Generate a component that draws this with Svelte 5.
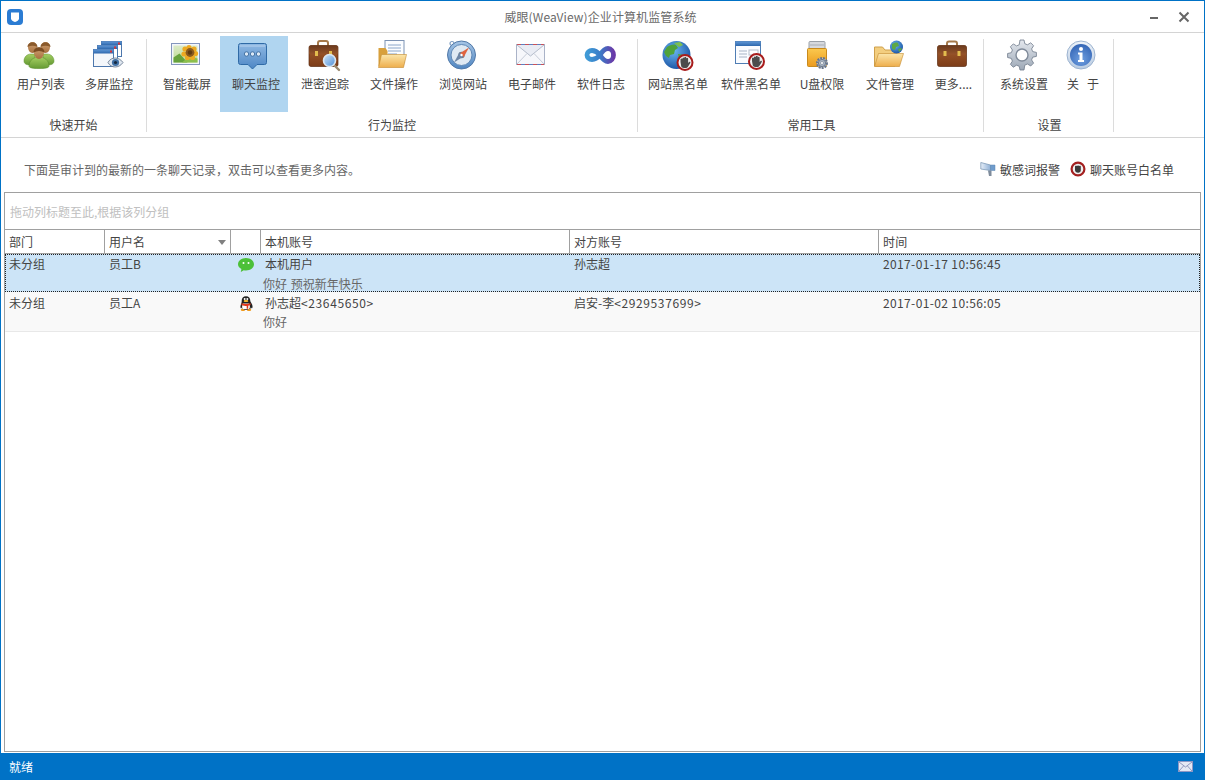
<script>
  // Ribbon definition: groups of toolbar buttons
  const groups = [
    {
      label: '快速开始',
      cls: 'g1',
      items: [
        { icon: 'users', text: '用户列表' },
        { icon: 'screens', text: '多屏监控' }
      ]
    },
    {
      label: '行为监控',
      cls: 'g2',
      items: [
        { icon: 'photo', text: '智能截屏' },
        { icon: 'chat', text: '聊天监控', active: true },
        { icon: 'leak', text: '泄密追踪' },
        { icon: 'folderdoc', text: '文件操作' },
        { icon: 'compass', text: '浏览网站' },
        { icon: 'mail', text: '电子邮件' },
        { icon: 'infinity', text: '软件日志' }
      ]
    },
    {
      label: '常用工具',
      cls: 'g3',
      items: [
        { icon: 'globestop', text: '网站黑名单', size: 'wide' },
        { icon: 'winstop', text: '软件黑名单', size: 'wide' },
        { icon: 'usb', text: 'U盘权限' },
        { icon: 'foldernet', text: '文件管理' },
        { icon: 'case', text: '更多....', size: 'slim' }
      ]
    },
    {
      label: '设置',
      cls: 'g4',
      items: [
        { icon: 'gear', text: '系统设置' },
        { icon: 'info', text: '关   于', size: 'tiny' }
      ]
    }
  ]

  const rows = [
    {
      dept: '未分组',
      user: '员工B',
      app: 'wechat',
      local: '本机用户',
      peer: '孙志超',
      time: '2017-01-17 10:56:45',
      msg: '你好 预祝新年快乐',
      selected: true
    },
    {
      dept: '未分组',
      user: '员工A',
      app: 'qq',
      local: '孙志超',
      localId: '<23645650>',
      peer: '启安-李',
      peerId: '<2929537699>',
      time: '2017-01-02 10:56:05',
      msg: '你好',
      selected: false
    }
  ]
</script>

{#snippet stopBadge(cx, cy, r)}
  <circle {cx} {cy} r={r} fill="#f2f2f2" stroke="#a81c1c" stroke-width="2" />
  <g transform="translate({cx} {cy}) scale(1.25)">
    <path
      d="M-3.600 -.5v-2.200a.8.8 0 0 1 1.500 0v-.8a.8.8 0 0 1 1.500 0v-.4a.8.8 0 0 1 1.600 0v.6a.8.8 0 0 1 1.500 0v3.600l.8-.8c.6-.4 1.300.2.900.8l-1.700 2.800c-.5.900-1.200 1.300-2.400 1.300h-.9c-1.500 0-2.400-1-2.400-2.400z"
      fill="#4c4c4c"
    />
  </g>
{/snippet}

{#snippet icon(name)}
  <svg class="ico" viewBox="0 0 32 32" width="32" height="32" aria-hidden="true">
    {#if name === 'users'}
      <path d="M0 22c0-4 3-7 7-7h4v9c-1 2-3 2-5 2-3 0-6-1-6-4zM19 15h4c4 0 7 3 7 7 0 3-3 4-6 4-2 0-4 0-5-2z" fill="url(#gGreen)" stroke="#5b8f2c" stroke-width=".5" />
      <path d="M4 8c0-3 2-5 4.500-5S13 5 13 8s-2 6-4.500 6S4 11 4 8zM17 8c0-3 2-5 4.500-5S26 5 26 8s-2 6-4.500 6S17 11 17 8z" fill="url(#gSkin)" />
      <path d="M3.500 8c0-6.500 10-6.500 10 0-3-1.800-7-1.800-10 0zM16.500 8c0-6.500 10-6.500 10 0-3-1.800-7-1.800-10 0z" fill="#8a5a2c" />
      <path d="M5 27c0-6 5-9 10-9s10 3 10 9c0 2-4 2.500-10 2.500S5 29 5 27z" fill="url(#gGreen)" stroke="#5b8f2c" stroke-width=".6" />
      <path d="M10 13.500c0-3.500 2.200-5 5-5s5 1.500 5 5-2.200 6.500-5 6.500-5-3-5-6.500z" fill="url(#gSkin)" />
      <path d="M9.500 13.500c0-7 11-7 11 0-3.500-2-7.500-2-11 0z" fill="#7c4d24" />
    {:else if name === 'screens'}
      <rect x="9.500" y="2.500" width="20" height="15" fill="#fff" stroke="#4d77ad" />
      <rect x="9.500" y="2.500" width="20" height="3.500" fill="url(#gBlue)" />
      <rect x="5.500" y="6.500" width="20" height="15" fill="#fff" stroke="#4d77ad" />
      <rect x="5.500" y="6.500" width="20" height="3.500" fill="url(#gBlue)" />
      <rect x="1.500" y="10.500" width="20" height="17" fill="#f4f7fb" stroke="#4d77ad" />
      <rect x="1.500" y="10.500" width="20" height="4" fill="url(#gBlue)" />
      <rect x="26" y="3.500" width="2" height="2" fill="#d33" />
      <rect x="22" y="7.500" width="2" height="2" fill="#d33" />
      <rect x="18" y="11.500" width="2" height="2" fill="#d33" />
      <path d="M16 23.500c3-6 11-6 15 0-4 6-12 6-15 0z" fill="#dfe7f0" stroke="#5d6f86" stroke-width=".8" />
      <circle cx="23.500" cy="23.500" r="3.600" fill="#3f6fa4" />
      <circle cx="23.500" cy="23.500" r="1.600" fill="#15283f" />
    {:else if name === 'photo'}
      <rect x="1.500" y="4.500" width="28" height="21" fill="#f3f6fb" stroke="#8496bd" />
      <rect x="3.500" y="6.500" width="24" height="17" fill="url(#gSky)" />
      <path d="M3.500 23.500v-5l6-4 8 9z" fill="#66a23c" />
      <path d="M12 23.500l7-6 8.500 2v4z" fill="#8dbf4e" />
      <g fill="#eda921">
        <circle cx="19" cy="8.500" r="2.600" /><circle cx="24" cy="10" r="2.600" /><circle cx="25.500" cy="14.500" r="2.600" />
        <circle cx="22.500" cy="18.500" r="2.600" /><circle cx="17.500" cy="18.500" r="2.600" /><circle cx="14" cy="15" r="2.600" />
        <circle cx="15" cy="10" r="2.600" />
      </g>
      <circle cx="20" cy="13.500" r="4.400" fill="#8a5a1e" />
      <circle cx="20" cy="13.500" r="2.200" fill="#5f3b10" />
    {:else if name === 'chat'}
      <path d="M3.500 4.500h24a2 2 0 0 1 2 2v17a2 2 0 0 1-2 2H20l-4.500 4.500L11 25.500H3.500a2 2 0 0 1-2-2v-17a2 2 0 0 1 2-2z" fill="url(#gChat)" stroke="#2f6aa6" />
      <path d="M3 6h25v2H3z" fill="#a9c9ea" opacity=".7" />
      <g fill="#dce9f6" stroke="#2f5f96" stroke-width=".8">
        <circle cx="9.500" cy="15" r="2.200" /><circle cx="15.500" cy="15" r="2.200" /><circle cx="21.500" cy="15" r="2.200" />
      </g>
    {:else if name === 'leak'}
      <path d="M10 7V4a2 2 0 0 1 2-2h6a2 2 0 0 1 2 2v3" fill="none" stroke="#a67a4c" stroke-width="2" />
      <rect x="1" y="6.500" width="29" height="21" rx="2" fill="url(#gCase)" stroke="#5b2d12" stroke-width=".7" />
      <rect x="1" y="6.500" width="29" height="9" rx="2" fill="url(#gCaseTop)" />
      <rect x="7" y="12" width="3" height="5" fill="#e3bc4e" />
      <rect x="21" y="12" width="3" height="5" fill="#e3bc4e" />
      <path d="M26 26l5 5" stroke="#9a8a70" stroke-width="2.400" stroke-linecap="round" />
      <circle cx="21.500" cy="21.500" r="6" fill="url(#gLens)" stroke="#dbe6f0" stroke-width="1.600" />
    {:else if name === 'folderdoc'}
      <rect x="8" y="1.500" width="19" height="22" fill="#fbfdff" stroke="#7d93b4" />
      <path d="M11 6h13M11 9h13M11 12h13M11 15h9" stroke="#8ba6ca" stroke-width="1" />
      <path d="M1.500 9h7l2 3v15h-9z" fill="#d8a03c" />
      <path d="M1.500 28.500l3-13h25l-3 13z" fill="url(#gFolder)" stroke="#c48a2e" stroke-width=".6" />
    {:else if name === 'compass'}
      <circle cx="6" cy="4.500" r="2" fill="none" stroke="#7d9cc1" stroke-width="1.200" />
      <circle cx="15.500" cy="16" r="14" fill="url(#gRing)" stroke="#5279a8" />
      <circle cx="15.500" cy="16" r="10.500" fill="#dfe9f3" stroke="#5f88b6" />
      <circle cx="15.500" cy="16" r="3.200" fill="#6f7d8e" />
      <path d="M23 8.500l-5.500 10-4-4z" fill="#e0633f" />
      <path d="M8 23.500l5.500-10 4 4z" fill="#6d86a6" />
      <circle cx="15.500" cy="16" r="1.200" fill="#fff" />
    {:else if name === 'mail'}
      <rect x="1.500" y="5.500" width="28" height="20" fill="#f6f7fb" stroke="#aab3c8" />
      <path d="M2 5.500h4M10 5.500h4M18 5.500h4M26 5.500h3M2 25.500h4M10 25.500h4M18 25.500h4M26 25.500h3" stroke="#c9525a" stroke-width="1.200" />
      <path d="M6 5.500h4M14 5.500h4M22 5.500h4M6 25.500h4M14 25.500h4M22 25.500h4" stroke="#5f7fbf" stroke-width="1.200" />
      <path d="M2 6l13.500 11L29 6" fill="#e9ecf4" stroke="#b4bccb" />
      <path d="M2 25l10-10.500M29 25L19 14.500" stroke="#c6ccd8" />
    {:else if name === 'infinity'}
      <path d="M16 16c-2.500-3-5-4.500-8-4.500-2.800 0-5 2-5 4.500s2.200 4.500 5 4.500c3 0 5.500-1.500 8-4.500zm0 0c2.500-4 5-6.500 8-6.500 3.200 0 5.500 3 5.500 6.500s-2.300 6.500-5.500 6.500c-3 0-5.500-2.500-8-6.500z" fill="none" stroke="url(#gInf)" stroke-width="4.800" />
    {:else if name === 'globestop'}
      <circle cx="15.500" cy="16" r="14" fill="url(#gGlobe)" />
      <path d="M6 8c3-2 6-3 9-2l2 3-3 2-1 4-4 1-1 3-3-2-2-4zM17 15l6 1 4 4-2 5-4 3-2-4z" fill="#4fa23b" />
      <path d="M13 4l6-1 3 3-4 2z" fill="#7cc04f" />
      {@render stopBadge(24, 23.500, 7.500)}
    {:else if name === 'winstop'}
      <rect x="1.500" y="2.500" width="25" height="22" fill="#fafcff" stroke="#4f7db4" />
      <rect x="1.500" y="2.500" width="25" height="4.500" fill="url(#gBlue)" />
      <path d="M5 12h8M5 15h8M5 18h8" stroke="#a8b4c6" />
      <rect x="15" y="11" width="9" height="5" fill="#fff" stroke="#b3bdcb" />
      {@render stopBadge(22.500, 22.500, 7.500)}
    {:else if name === 'usb'}
      <path d="M5 2.500h14a1 1 0 0 1 1 1v7H4v-7a1 1 0 0 1 1-1z" fill="#d6d9de" stroke="#9aa0a8" />
      <path d="M5 6h14" stroke="#a9adb4" />
      <rect x="2.500" y="9.500" width="19" height="18" rx="1" fill="url(#gUsb)" stroke="#c98a1d" />
      <g transform="translate(17 24)">
        <circle r="5" fill="#c3ccd8" stroke="#68758a" stroke-dasharray="2 1" stroke-width="2" />
        <circle r="3.600" fill="#aab6c5" stroke="#6b7788" />
        <circle r="1.500" fill="#fff" stroke="#6b7788" stroke-width=".6" />
      </g>
    {:else if name === 'foldernet'}
      <path d="M1.500 8h8l2.500 3h10v16h-20.500z" fill="#f3ce7f" stroke="#cfa04c" />
      <path d="M1.500 27.500l4-13h25l-4 13z" fill="url(#gFolder)" stroke="#c48a2e" stroke-width=".6" />
      <circle cx="23.500" cy="8" r="6.500" fill="url(#gGlobe)" />
      <path d="M19 5c2-1 4-2 6-1l1 3-3 1-1 3-3-1zM25 10l3-1 1 1-3 3z" fill="#5da845" />
    {:else if name === 'case'}
      <path d="M10 7V4.500a2 2 0 0 1 2-2h6a2 2 0 0 1 2 2V7" fill="none" stroke="#a67a4c" stroke-width="2" />
      <rect x="0.500" y="6.500" width="29" height="21" rx="2" fill="url(#gCase)" stroke="#5b2d12" stroke-width=".7" />
      <rect x="0.500" y="6.500" width="29" height="9" rx="2" fill="url(#gCaseTop)" />
      <rect x="6.500" y="12" width="3" height="5" fill="#e3bc4e" />
      <rect x="20.500" y="12" width="3" height="5" fill="#e3bc4e" />
    {:else if name === 'gear'}
      <path d="M13 1h4l.8 3.700 2.700 1.100 3.200-2 2.900 2.900-2 3.200 1.100 2.700 3.700.8v4l-3.700.8-1.100 2.700 2 3.200-2.900 2.900-3.200-2-2.700 1.100L17 31h-4l-.8-3.700-2.700-1.100-3.200 2-2.900-2.900 2-3.200-1.100-2.700L.6 18.500v-4l3.700-.8 1.100-2.700-2-3.200 2.900-2.900 3.200 2 2.700-1.100z" fill="url(#gGear)" stroke="#6e7a8a" stroke-width=".8" />
      <circle cx="15" cy="16" r="6" fill="#fff" stroke="#808b9a" stroke-width="1.400" />
    {:else if name === 'info'}
      <circle cx="15" cy="16" r="14" fill="url(#gInfoRing)" stroke="#9cb3d0" />
      <circle cx="15" cy="16" r="11" fill="url(#gInfo)" />
      <circle cx="15" cy="10" r="2" fill="#fff" />
      <path d="M12 13.500h4.500V21H18v2h-6v-2h1.500v-5.500H12z" fill="#fff" />
    {/if}
  </svg>
{/snippet}

<svg class="defs" width="0" height="0" aria-hidden="true">
  <defs>
    <linearGradient id="gGreen" x1="0" y1="0" x2="0" y2="1"><stop offset="0" stop-color="#a5cf62" /><stop offset="1" stop-color="#659a34" /></linearGradient>
    <linearGradient id="gSkin" x1="0" y1="0" x2="0" y2="1"><stop offset="0" stop-color="#d0a274" /><stop offset="1" stop-color="#a8703e" /></linearGradient>
    <linearGradient id="gBlue" x1="0" y1="0" x2="0" y2="1"><stop offset="0" stop-color="#5f97d6" /><stop offset="1" stop-color="#2e68ad" /></linearGradient>
    <linearGradient id="gSky" x1="0" y1="0" x2="0" y2="1"><stop offset="0" stop-color="#dcebc8" /><stop offset="1" stop-color="#b9d98f" /></linearGradient>
    <linearGradient id="gChat" x1="0" y1="0" x2="0" y2="1"><stop offset="0" stop-color="#8fb9e4" /><stop offset="1" stop-color="#4d86c4" /></linearGradient>
    <linearGradient id="gCase" x1="0" y1="0" x2="0" y2="1"><stop offset="0" stop-color="#a45c2e" /><stop offset="1" stop-color="#7d3d18" /></linearGradient>
    <linearGradient id="gCaseTop" x1="0" y1="0" x2="0" y2="1"><stop offset="0" stop-color="#6a3a1d" /><stop offset="1" stop-color="#96532a" /></linearGradient>
    <linearGradient id="gLens" x1="0" y1="0" x2="1" y2="1"><stop offset="0" stop-color="#cfe6fb" /><stop offset="1" stop-color="#4f8fd6" /></linearGradient>
    <linearGradient id="gFolder" x1="0" y1="0" x2="0" y2="1"><stop offset="0" stop-color="#fbe6ab" /><stop offset="1" stop-color="#eeae4c" /></linearGradient>
    <linearGradient id="gRing" x1="0" y1="0" x2="0" y2="1"><stop offset="0" stop-color="#a7c6e6" /><stop offset="1" stop-color="#4f86c2" /></linearGradient>
    <linearGradient id="gInf" x1="0" y1="0" x2="1" y2="0"><stop offset="0" stop-color="#3f9ad6" /><stop offset=".5" stop-color="#3a7cc8" /><stop offset="1" stop-color="#6a3aa8" /></linearGradient>
    <radialGradient id="gGlobe" cx=".4" cy=".35" r=".75"><stop offset="0" stop-color="#6ab6f2" /><stop offset="1" stop-color="#124a9c" /></radialGradient>
    <linearGradient id="gUsb" x1="0" y1="0" x2="0" y2="1"><stop offset="0" stop-color="#fbc94f" /><stop offset="1" stop-color="#eb9a1d" /></linearGradient>
    <linearGradient id="gGear" x1="0" y1="0" x2="0" y2="1"><stop offset="0" stop-color="#e4e8ee" /><stop offset="1" stop-color="#9da8b6" /></linearGradient>
    <linearGradient id="gInfoRing" x1="0" y1="0" x2="0" y2="1"><stop offset="0" stop-color="#eef3f9" /><stop offset="1" stop-color="#b8cbe2" /></linearGradient>
    <radialGradient id="gInfo" cx=".5" cy=".7" r=".8"><stop offset="0" stop-color="#6f9fe0" /><stop offset="1" stop-color="#2b5db0" /></radialGradient>
    <linearGradient id="gHorn" x1="0" y1="0" x2="1" y2="0"><stop offset="0" stop-color="#e6eef8" /><stop offset="1" stop-color="#8fb0d6" /></linearGradient>
  </defs>
</svg>

<div class="window">
  <header class="titlebar">
    <svg class="logo" viewBox="0 0 16 16" width="16" height="16" aria-hidden="true">
      <rect width="16" height="16" rx="4" fill="#2b7cd3" />
      <path d="M4 3.500h8v6c0 1.800-2.200 3-4 3.500-1.800-.5-4-1.700-4-3.500z" fill="#fff" />
    </svg>
    <span class="title">威眼(WeaView)企业计算机监管系统</span>
    <div class="winbtns">
      <span class="min"></span>
      <svg viewBox="0 0 12 12" width="12" height="12" aria-hidden="true">
        <path d="M1.500 1.500l9 9M10.500 1.500l-9 9" stroke="#666" stroke-width="2" />
      </svg>
    </div>
  </header>

  <nav class="ribbon">
    {#each groups as g}
      <section class="group {g.cls}">
        <div class="btns">
          {#each g.items as it}
            <button class="rbtn {it.size ?? ''}" class:active={it.active}>
              {@render icon(it.icon)}
              <span class="cap">{it.text}</span>
            </button>
          {/each}
        </div>
        <div class="glabel">{g.label}</div>
      </section>
      <div class="sep"></div>
    {/each}
  </nav>

  <div class="hint">
    <span class="hint-text">下面是审计到的最新的一条聊天记录，双击可以查看更多内容。</span>
    <div class="links">
      <span class="link">
        <svg viewBox="0 0 16 16" width="16" height="16" aria-hidden="true">
          <path d="M.8 1.500l9.700 2.500v5.500L.8 8z" fill="url(#gHorn)" stroke="#7f9ab8" stroke-width=".8" />
          <path d="M10.500 4h4.500v5.500h-4.500z" fill="#6f9ccc" stroke="#5f86b0" stroke-width=".5" />
          <path d="M8 9.500h3.500v5.500H9z" fill="#7f8c9c" />
        </svg>
        敏感词报警
      </span>
      <span class="link">
        <svg viewBox="0 0 16 16" width="16" height="16" aria-hidden="true">
          <circle cx="8" cy="8" r="6.400" fill="#efefef" stroke="#a32020" stroke-width="2.200" />
          <path d="M5 8V5.500a.8.8 0 0 1 1.400-.4.8.8 0 0 1 1.500-.2.8.8 0 0 1 1.400.2.8.8 0 0 1 1.500.4v3.800c0 1.600-1.100 2.500-2.600 2.500C6.200 11.800 5 10.600 5 9z" fill="#3a3a3a" />
        </svg>
        聊天账号白名单
      </span>
    </div>
  </div>

  <main class="grid">
    <div class="grouppanel">拖动列标题至此,根据该列分组</div>
    <div class="row head">
      <div class="c dept">部门</div>
      <div class="c user">用户名<i class="sort"></i></div>
      <div class="c app"></div>
      <div class="c local">本机账号</div>
      <div class="c peer">对方账号</div>
      <div class="c time">时间</div>
    </div>
    {#each rows as r}
      <div class="record" class:selected={r.selected}>
        <div class="row">
          <div class="c dept">{r.dept}</div>
          <div class="c user">{r.user}</div>
          <div class="c app">
            {#if r.app === 'wechat'}
              <svg viewBox="0 0 16 16" width="16" height="16" aria-hidden="true">
                <path d="M8 1c4.400 0 8 2.800 8 6.300s-3.600 6.200-8 6.200c-.8 0-1.500-.1-2.200-.3L2.800 15l.6-3C1.300 11 0 9.300 0 7.300 0 3.800 3.600 1 8 1z" fill="#4cc038" />
                <circle cx="5.500" cy="6" r="1" fill="#fff" />
                <circle cx="10.500" cy="6" r="1" fill="#fff" />
              </svg>
            {:else}
              <svg viewBox="0 0 16 16" width="16" height="16" aria-hidden="true">
                <path d="M8 .3c2.800 0 4.300 2 4.300 4.500 0 1 1 2 1.800 3.700.8 2 .4 3.700-.1 3.700s-.9-.6-1.100-1c-.2 1.200-.8 2-1.300 2.500H5.400c-.6-.5-1.100-1.300-1.300-2.500-.2.400-.6 1-1.100 1s-.9-1.700-.1-3.700C3.700 6.800 3.700 5.800 3.700 4.800 3.700 2.300 5.200.3 8 .3z" fill="#222" />
                <path d="M5 7.500h6c1.200 2 1.200 4.500 0 5.500H5c-1.200-1-1.200-3.500 0-5.500z" fill="#fff" />
                <path d="M3.500 7.200c3 1.100 6 1.100 9 0v1.800l-2.300.7v3H8.700v-2.600c-1.700 0-3.700-.4-5.200-1.100z" fill="#e23a1e" />
                <path d="M6.300 4h3.400l.6 1.500c-1.100.7-3.500.7-4.600 0z" fill="#f2b632" />
                <circle cx="6.700" cy="3" r="1" fill="#fff" /><circle cx="9.300" cy="3" r="1" fill="#fff" />
                <path d="M3 13.300c1.200-1 3-.5 4 1.700H4c-1 0-1.500-1-1-1.700zM13 13.300c-1.200-1-3-.5-4 1.700h3c1 0 1.500-1 1-1.700z" fill="#f09a1c" />
              </svg>
            {/if}
          </div>
          <div class="c local">{r.local}<span class="ids">{r.localId ?? ''}</span></div>
          <div class="c peer">{r.peer}<span class="ids">{r.peerId ?? ''}</span></div>
          <div class="c time">{r.time}</div>
        </div>
        <div class="msg">{r.msg}</div>
      </div>
    {/each}
  </main>

  <footer class="status">
    <span>就绪</span>
    <svg viewBox="0 0 15 11" width="15" height="11" aria-hidden="true">
      <rect x=".5" y=".5" width="14" height="10" fill="#e4e8f4" stroke="#8d97c4" />
      <path d="M1 1l6.500 5L14 1M1 10l4.500-5M14 10L9.500 5" fill="none" stroke="#7a84b0" stroke-width=".8" />
    </svg>
  </footer>
</div>

<style>
  :global(body) {
    margin: 0;
    background: #fff;
  }

  .defs {
    position: absolute;
  }

  .window {
    width: 1205px;
    height: 780px;
    box-sizing: border-box;
    display: flex;
    flex-direction: column;
    background: #fff;
    border: solid #0072c6;
    border-width: 1px 1px 0 1px;
    font-family: 'Noto Sans CJK SC', 'Liberation Sans', sans-serif;
    font-size: 12px;
    color: #444;
    overflow: hidden;
  }

  .titlebar {
    height: 32px;
    box-sizing: border-box;
    flex: none;
    display: flex;
    align-items: center;
    padding-left: 6px;
    border-bottom: 1px solid #d4d4d4;
  }

  .title {
    flex: 1;
    text-align: center;
    padding-left: 28px;
    letter-spacing: 0.1px;
    color: #6a6a6a;
  }

  .winbtns {
    display: flex;
    align-items: center;
    gap: 20px;
    padding-right: 14px;
  }

  .min {
    display: block;
    width: 8px;
    height: 2px;
    background: #666;
    margin-top: 2px;
  }

  .ribbon {
    height: 104px;
    flex: none;
    display: flex;
    border-bottom: 1px solid #d4d4d4;
  }

  .group {
    display: flex;
    flex-direction: column;
    box-sizing: border-box;
  }

  .g1 {
    width: 145px;
    padding-left: 6px;
  }

  .g2 {
    width: 490px;
    padding-left: 6px;
  }

  .g3 {
    width: 345px;
    padding-left: 4px;
  }

  .g4 {
    width: 129px;
    padding-left: 6px;
  }

  .btns {
    display: flex;
    gap: 1px;
    padding-top: 3px;
  }

  .g1 .btns {
    gap: 0;
  }

  .g3 .rbtn:nth-child(4) {
    margin-left: -1px;
  }

  .rbtn {
    width: 68px;
    height: 76px;
    flex: none;
    padding: 3px 0 0;
    margin: 0;
    border: none;
    background: transparent;
    display: flex;
    flex-direction: column;
    align-items: center;
    font: inherit;
    color: inherit;
  }

  .rbtn.wide {
    width: 72px;
  }

  .rbtn.slim {
    width: 57px;
  }

  .rbtn.tiny {
    width: 48px;
  }

  .rbtn.active {
    background: #b0d5f0;
    margin: 0 2px 0 -2px;
  }

  .rbtn.active .cap {
    margin-left: 4px;
  }

  .ico {
    display: block;
    flex: none;
    margin-right: 2px;
    overflow: visible;
  }

  .cap {
    margin-top: 4px;
    line-height: 18px;
    white-space: pre;
  }

  .glabel {
    text-align: center;
    line-height: 18px;
    margin-top: 4px;
    margin-left: -6px;
  }

  .g3 .glabel {
    margin-left: -2px;
  }

  .g4 .glabel {
    margin-left: -4px;
  }

  .sep {
    width: 1px;
    flex: none;
    background: #dcdcdc;
    margin: 6px 0 5px;
  }

  .hint {
    height: 54px;
    flex: none;
    box-sizing: border-box;
    padding: 8px 30px 0 23px;
    display: flex;
    align-items: center;
    justify-content: space-between;
    color: #666;
  }

  .links {
    display: flex;
    gap: 10px;
    color: #444;
  }

  .link {
    display: flex;
    align-items: center;
    gap: 4px;
  }

  .grid {
    flex: 1;
    min-height: 0;
    margin: 0 3px 1px;
    border: 1px solid #a0a0a0;
  }

  .grouppanel {
    height: 37px;
    box-sizing: border-box;
    padding: 10px 5px 0;
    line-height: 18px;
    color: #c0c0c0;
    border-bottom: 1px solid #a0a0a0;
  }

  .row {
    display: grid;
    grid-template-columns: 100px 126px 30px 309px 309px 1fr;
  }

  .head {
    height: 24px;
    box-sizing: border-box;
    border-bottom: 1px solid #a0a0a0;
    line-height: 23px;
  }

  .head .c {
    border-right: 1px solid #a0a0a0;
    position: relative;
  }

  .head .c:last-child {
    border-right: none;
  }

  .c {
    padding-left: 4px;
    min-width: 0;
    white-space: nowrap;
  }

  .sort {
    position: absolute;
    right: 4px;
    top: 10px;
    width: 0;
    height: 0;
    border: solid transparent;
    border-width: 5px 4px 0;
    border-top-color: #808080;
  }

  .record {
    height: 40px;
    box-sizing: border-box;
    padding-top: 1px;
    background: #f9f9f9;
    border: 1px solid transparent;
    border-bottom-color: #e8e8e8;
    line-height: 18px;
  }

  .record .row {
    margin-left: -1px;
  }

  .record.selected {
    height: 38px;
    padding-top: 0;
    background: #cce4f7;
    border: 1px dotted #222;
  }

  .time {
    letter-spacing: 0.37px;
  }

  .ids {
    letter-spacing: 0.62px;
  }

  .app {
    padding: 2px 0 0 7px;
  }

  .app svg {
    display: block;
  }

  .msg {
    padding-left: 257px;
    margin-top: 1px;
    word-spacing: 1px;
    color: #666;
  }

  .selected .msg {
    margin-top: 2px;
  }

  .status {
    height: 27px;
    flex: none;
    background: #0072c6;
    color: #fff;
    display: flex;
    align-items: center;
    justify-content: space-between;
    padding: 0 11px 0 8px;
  }
</style>
